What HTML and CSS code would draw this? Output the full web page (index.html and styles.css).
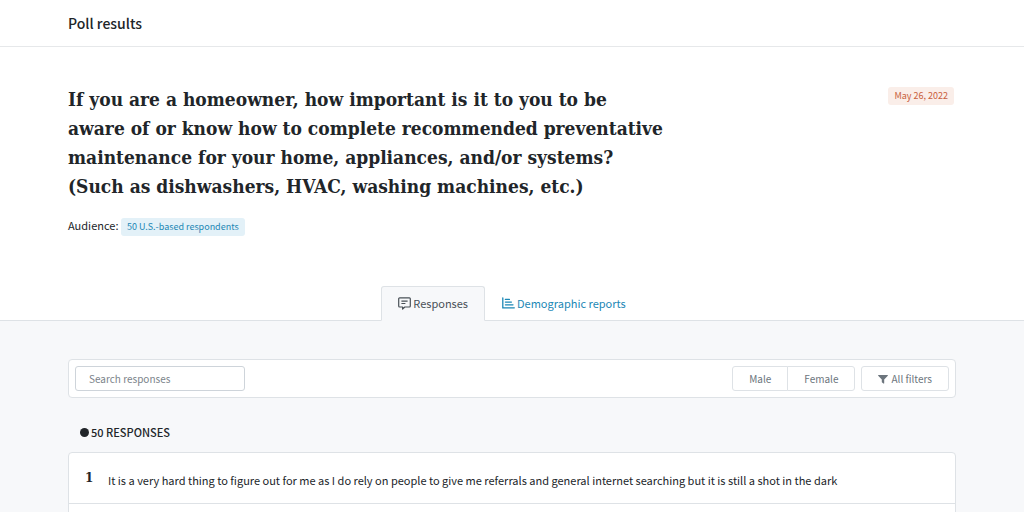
FILE: index.html
```html
<!DOCTYPE html>
<html lang="en">
<head>
    <meta charset="UTF-8">
    <meta name="viewport" content="width=device-width, initial-scale=1.0">
    <title>Poll results</title>
    <link rel="stylesheet" href="styles.css">
</head>
<body>

    <header class="topbar">
        <h1>Poll results</h1>
    </header>

    <section class="poll">
        <div class="poll-heading">
            <h2>If you are a homeowner, how important is it to you to be<br>
                aware of or know how to complete recommended preventative<br>
                maintenance for your home, appliances, and/or systems?<br>
                (Such as dishwashers, HVAC, washing machines, etc.)</h2>
            <span class="badge badge-date">May 26, 2022</span>
        </div>
        <p class="audience">Audience: <span class="badge badge-audience">50 U.S.-based respondents</span></p>
    </section>

    <nav class="tabs">
        <a class="tab active" href="#responses">
            <svg width="13" height="13" viewBox="0 0 13 13" fill="none" stroke="currentColor" stroke-width="1.2" stroke-linejoin="round">
                <path d="M1.6.8h9.8a.9.9 0 0 1 .9.9v7.4a.9.9 0 0 1-.9.9H6.8L4.6 12v-2h-3a.9.9 0 0 1-.9-.9V1.7a.9.9 0 0 1 .9-.9z"/>
                <path d="M3.4 4.2h6.2M3.4 6.5h4"/>
            </svg>
            Responses
        </a>
        <a class="tab" href="#demographics">
            <svg width="13" height="13" viewBox="0 0 13 13" fill="none" stroke="currentColor" stroke-width="1.3" stroke-linecap="round">
                <path d="M.8 1v9.8h11.5M3.4 2.4h4M3.4 5.1h6M3.4 7.8h7.6"/>
            </svg>
            Demographic reports
        </a>
    </nav>

    <main class="results" id="responses">
        <form class="filters">
            <input class="search" type="search" placeholder="Search responses" aria-label="Search responses">
            <div class="btn-group">
                <button class="btn" type="button">Male</button>
                <button class="btn" type="button">Female</button>
            </div>
            <button class="btn" type="button">
                <svg width="10" height="10" viewBox="0 0 10 10" fill="currentColor">
                    <path d="M.5 1h9c.4 0 .6.5.3.8L6.2 5.5v3.8c0 .4-.4.5-.7.3L4.1 8.5a.6.6 0 0 1-.3-.5V5.5L.2 1.8C-.1 1.5.1 1 .5 1z"/>
                </svg>
                All filters
            </button>
        </form>

        <h3 class="count"><span class="dot"></span>50 RESPONSES</h3>

        <ol class="responses">
            <li>
                <span class="number">1</span>
                <p>It is a very hard thing to figure out for me as I do rely on people to give me referrals and general internet searching but it is still a shot in the dark</p>
            </li>
            <li></li>
        </ol>
    </main>

</body>
</html>
```
FILE: styles.css
```css
* {
    box-sizing: border-box;
}

body {
    margin: 0;
    font-family: "Noto Sans CJK SC", "Open Sans", sans-serif;
    font-size: 11px;
    line-height: 20px;
    color: #212529;
    background-color: #f7f8fa;
}

.topbar {
    background-color: white;
    border-bottom: 1px solid #e6e8ea;
    padding: 11px 68px;
}

.topbar h1 {
    margin: 0;
    font-size: 14px;
    line-height: 24px;
    font-weight: 500;
}

.poll {
    background-color: white;
    padding: 38px 68px 50px;
}

.poll-heading {
    display: flex;
    justify-content: space-between;
    align-items: flex-start;
}

.poll-heading h2 {
    margin: 0;
    font-family: "DejaVu Serif Condensed", "DejaVu Serif", serif;
    font-stretch: condensed;
    font-size: 19px;
    line-height: 29px;
    font-weight: bold;
    white-space: nowrap;
}

.badge {
    display: inline-block;
    padding: 0 6px;
    border-radius: 3px;
    font-size: 9px;
    line-height: 18px;
}

.badge-date {
    margin: 2px 2px 0 0;
    color: #c9603b;
    background-color: #faeee9;
}

.badge-audience {
    color: #1b87b5;
    background-color: #e3f1f8;
}

.audience {
    margin: 14px 0 0;
}

.tabs {
    display: flex;
    justify-content: center;
    background-color: white;
    border-bottom: 1px solid #dee2e6;
}

.tab {
    display: flex;
    align-items: center;
    gap: 2px;
    padding: 6px 16px;
    margin-bottom: -1px;
    border: 1px solid transparent;
    border-radius: 3px 3px 0 0;
    line-height: 21px;
    color: #1b87b5;
    text-decoration: none;
}

.tab.active {
    color: #495057;
    background-color: #f7f8fa;
    border-color: #dee2e6 #dee2e6 #f7f8fa;
}

.results {
    padding: 38px 68px 0;
}

.filters {
    display: flex;
    align-items: center;
    gap: 6px;
    padding: 6px;
    background-color: white;
    border: 1px solid #dee2e6;
    border-radius: 4px;
}

.search {
    width: 170px;
    height: 25px;
    margin-right: auto;
    padding: 0 13px;
    font: inherit;
    font-size: 10px;
    border: 1px solid #ced4da;
    border-radius: 3px;
    appearance: none;
}

.search::placeholder {
    color: #7b838a;
}

.btn {
    display: inline-flex;
    align-items: center;
    gap: 3px;
    height: 25px;
    padding: 0 16px;
    font: inherit;
    font-size: 10px;
    color: #6c757d;
    background-color: white;
    border: 1px solid #dee2e6;
    border-radius: 3px;
    cursor: pointer;
}

.btn-group {
    display: flex;
}

.btn-group .btn:first-child {
    border-radius: 3px 0 0 3px;
}

.btn-group .btn:last-child {
    margin-left: -1px;
    border-radius: 0 3px 3px 0;
}

.count {
    display: flex;
    align-items: center;
    gap: 2px;
    margin: 24px 0 10px 12px;
    font-size: 11px;
    font-weight: 500;
}

.dot {
    width: 9px;
    height: 9px;
    border-radius: 50%;
    background-color: #212529;
}

.responses {
    list-style: none;
    margin: 0;
    padding: 0;
    background-color: white;
    border: 1px solid #dee2e6;
    border-radius: 4px 4px 0 0;
}

.responses li {
    display: flex;
    min-height: 50px;
    padding: 15px 16px 13px;
    border-bottom: 1px solid #dee2e6;
}

.responses p {
    margin: 2px 0 0;
}

.number {
    width: 23px;
    font-family: "DejaVu Serif", serif;
    font-size: 12px;
    font-weight: bold;
}
```
